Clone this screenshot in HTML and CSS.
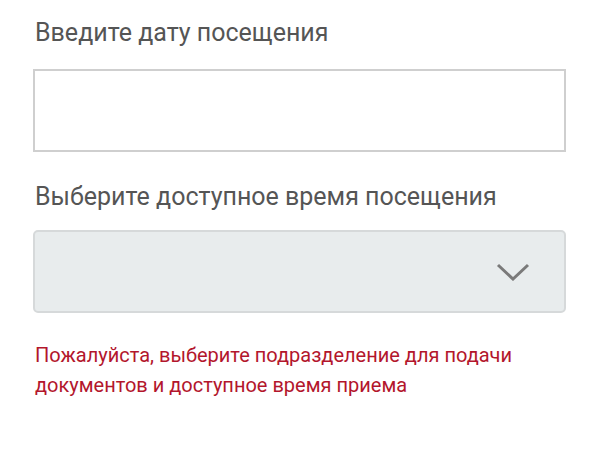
FILE: index.html
```html
<!DOCTYPE html>
<html lang="ru">
<head>
  <meta charset="UTF-8" />
  <meta name="viewport" content="width=device-width, initial-scale=1.0" />
  <title>Запись на прием</title>
  <link rel="stylesheet" href="styles.css">
</head>
<body>
  <form class="visit-form">
    <label class="field-label" for="visitDate">Введите дату посещения</label>
    <input type="text" id="visitDate" class="date-input" />

    <label class="field-label time-label" for="visitTime">Выберите доступное время посещения</label>
    <div class="select-box" id="visitTime">
      <svg class="chevron" width="34" height="18" viewBox="0 0 34 18">
        <path d="M2 2 L17 16 L32 2" fill="none" stroke="#7a7a7a" stroke-width="3" />
      </svg>
    </div>

    <p class="error-text">Пожалуйста, выберите подразделение для подачи документов и доступное время приема</p>
  </form>
</body>
</html>
```

FILE: styles.css
```css
body {
  margin: 0;
  padding: 0 34px 0 33px;
  background-color: #fff;
  font-family: Roboto, "Noto Sans", sans-serif;
}

.visit-form {
  display: flex;
  flex-direction: column;
  padding-top: 18px;
}

.field-label {
  font-size: 25px;
  line-height: 30px;
  color: #555;
  padding-left: 2px;
}

.time-label {
  margin-top: 30px;
}

.date-input {
  box-sizing: border-box;
  height: 83px;
  margin-top: 21px;
  border: 2px solid #cfcfcf;
  background: #fff;
  outline: none;
}

.select-box {
  box-sizing: border-box;
  height: 83px;
  margin-top: 18px;
  border: 2px solid #d6d9da;
  border-radius: 5px;
  background-color: #e8eced;
  display: flex;
  align-items: center;
  justify-content: flex-end;
  padding-right: 34px;
}

.chevron {
  display: block;
}

.error-text {
  margin: 27px 0 0;
  padding-left: 2px;
  font-size: 20px;
  line-height: 30px;
  color: #b3162c;
}
```
